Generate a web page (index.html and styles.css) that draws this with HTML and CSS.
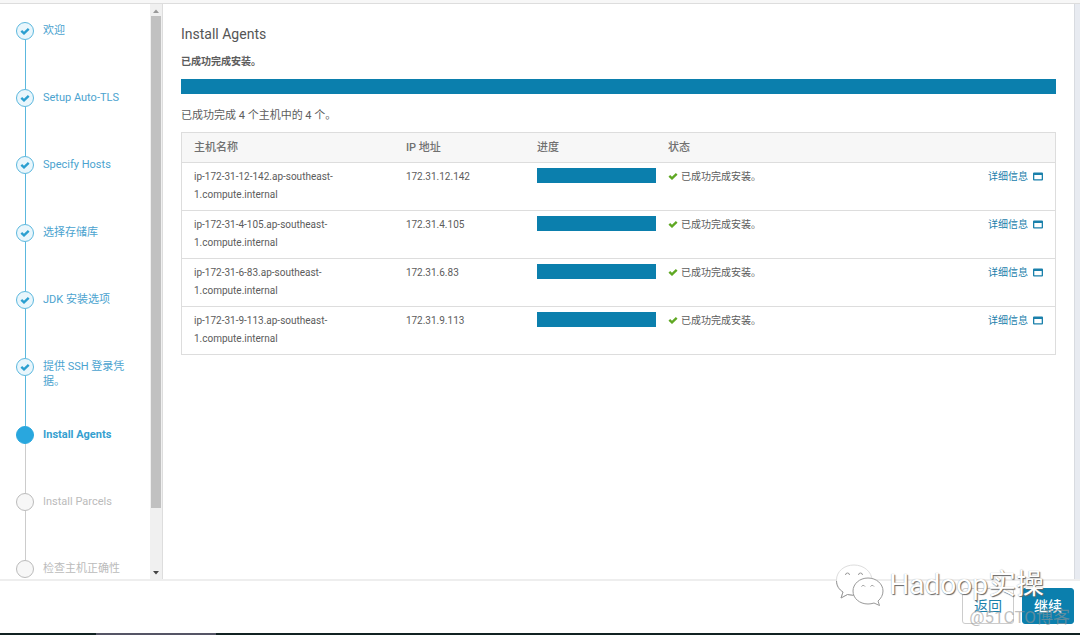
FILE: index.html
```html
<!DOCTYPE html>
<html lang="zh-CN">
<head>
<meta charset="utf-8">
<title>Install Agents</title>
<link rel="stylesheet" href="styles.css">
</head>
<body>
<svg class="defs" aria-hidden="true">
  <symbol id="check" viewBox="0 0 10 10"><path d="M1.300 4.800 L4 7.300 L8.700 2.800" fill="none" stroke="currentColor" stroke-width="2.400"/></symbol>
  <symbol id="window" viewBox="0 0 10 9"><path fill="currentColor" fill-rule="evenodd" d="M1 0.500h8a1 1 0 0 1 1 1v6a1 1 0 0 1-1 1H1a1 1 0 0 1-1-1v-6a1 1 0 0 1 1-1zM1.300 3v4.200h7.400V3z"/></symbol>
</svg>
<div class="app">
  <div class="topline"></div>
  <div class="body">
    <aside class="sidebar">
      <ol class="steps">
        <li class="step done"><span class="dot"><svg><use href="#check"/></svg></span><a href="#" class="label">欢迎</a></li>
        <li class="step done"><span class="dot"><svg><use href="#check"/></svg></span><a href="#" class="label">Setup Auto-TLS</a></li>
        <li class="step done"><span class="dot"><svg><use href="#check"/></svg></span><a href="#" class="label">Specify Hosts</a></li>
        <li class="step done"><span class="dot"><svg><use href="#check"/></svg></span><a href="#" class="label">选择存储库</a></li>
        <li class="step done"><span class="dot"><svg><use href="#check"/></svg></span><a href="#" class="label">JDK 安装选项</a></li>
        <li class="step done"><span class="dot"><svg><use href="#check"/></svg></span><a href="#" class="label">提供 SSH 登录凭据。</a></li>
        <li class="step current"><span class="dot"></span><span class="label">Install Agents</span></li>
        <li class="step"><span class="dot"></span><span class="label">Install Parcels</span></li>
        <li class="step"><span class="dot"></span><span class="label">检查主机正确性</span></li>
      </ol>
      <div class="scrollbar" aria-hidden="true">
        <svg class="arrow up" viewBox="0 0 6 4"><path d="M0 4L3 0.5L6 4z"/></svg>
        <div class="thumb"></div>
        <svg class="arrow down" viewBox="0 0 6 4"><path d="M0 0L3 3.5L6 0z"/></svg>
      </div>
    </aside>
    <main class="content">
      <h1>Install Agents</h1>
      <p class="summary">已成功完成安装。</p>
      <div class="bar" role="progressbar" aria-valuenow="100" aria-label="安装进度"></div>
      <p class="count">已成功完成 4 个主机中的 4 个。</p>
      <table class="hosts">
        <thead>
          <tr><th class="c-name">主机名称</th><th class="c-ip">IP 地址</th><th class="c-progress">进度</th><th class="c-status">状态</th><th></th></tr>
        </thead>
        <tbody>
          <tr>
            <td>ip-172-31-12-142.ap-southeast-<br>1.compute.internal</td><td>172.31.12.142</td>
            <td><div class="bar" role="progressbar" aria-valuenow="100" aria-label="进度"></div></td>
            <td><svg class="ok"><use href="#check"/></svg>已成功完成安装。</td>
            <td class="details"><a href="#">详细信息<svg><use href="#window"/></svg></a></td>
          </tr>
          <tr>
            <td>ip-172-31-4-105.ap-southeast-<br>1.compute.internal</td><td>172.31.4.105</td>
            <td><div class="bar" role="progressbar" aria-valuenow="100" aria-label="进度"></div></td>
            <td><svg class="ok"><use href="#check"/></svg>已成功完成安装。</td>
            <td class="details"><a href="#">详细信息<svg><use href="#window"/></svg></a></td>
          </tr>
          <tr>
            <td>ip-172-31-6-83.ap-southeast-<br>1.compute.internal</td><td>172.31.6.83</td>
            <td><div class="bar" role="progressbar" aria-valuenow="100" aria-label="进度"></div></td>
            <td><svg class="ok"><use href="#check"/></svg>已成功完成安装。</td>
            <td class="details"><a href="#">详细信息<svg><use href="#window"/></svg></a></td>
          </tr>
          <tr>
            <td>ip-172-31-9-113.ap-southeast-<br>1.compute.internal</td><td>172.31.9.113</td>
            <td><div class="bar" role="progressbar" aria-valuenow="100" aria-label="进度"></div></td>
            <td><svg class="ok"><use href="#check"/></svg>已成功完成安装。</td>
            <td class="details"><a href="#">详细信息<svg><use href="#window"/></svg></a></td>
          </tr>
        </tbody>
      </table>
    </main>
    <div class="gutter"></div>
  </div>
  <footer class="footer">
    <button class="btn" type="button">返回</button>
    <button class="btn primary" type="button">继续</button>
  </footer>
  <div class="taskbar"></div>
  <div class="brand">
    <svg viewBox="0 0 50 42">
      <g fill="#fff" stroke="#999" stroke-width="1">
        <path d="M19 1C9 1 1.500 7.500 1.500 16c0 5 2.500 9 6.500 12L6 34l6.500-3.500C15 31.300 17 31.500 20 31.500C30 31.500 37 25 37 16.500C37 8 29 1 19 1z" stroke="#ddd"/>
        <path d="M33 14C24.500 14 18 20 18 27c0 7.300 6.500 13 15 13c2 0 4-.3 6-1l5.500 2.500L43 37c3-2.500 5-6 5-10C48 20 41.500 14 33 14z"/>
        <path d="M1.500 17c0 5 2.500 8.500 6.500 11L6 34l6.500-3.500l6 .8M10.500 11a2 2 0 0 1 4 0M23.500 11a2 2 0 0 1 4 0M26.500 22.500a2 2 0 0 1 3.500 0M35.500 22.500a2 2 0 0 1 3.500 0" fill="none"/>
      </g>
    </svg>
    <span>Hadoop实操</span>
  </div>
  <div class="credit">@51CTO博客</div>
</div>
</body>
</html>
```
FILE: styles.css
```css
* { box-sizing: border-box; }
body {
  margin: 0;
  background: #fff;
  color: #5c5c5c;
  font: 10px/18px Roboto, "Noto Sans CJK SC", sans-serif;
}
h1, p, ol { margin: 0; padding: 0; }
a { color: #1a80ab; text-decoration: none; }
.defs { display: none; }
.app { position: relative; display: flex; flex-direction: column; height: 100vh; overflow: hidden; }
.topline { flex: none; height: 4px; background: #f7f7f7; border-bottom: 1px solid #ddd; }
.body { display: flex; flex: 1; min-height: 0; }

.sidebar { display: flex; flex: none; width: 163px; border-right: 1px solid #ddd; overflow: hidden; }
.steps { flex: 1; min-width: 0; padding: 18px 22px 0 16px; list-style: none; }
.step { position: relative; display: flex; gap: 9px; height: 67px; color: #bbb; font-size: 11px; line-height: 15px; }
.step:nth-child(3n) { height: 68px; }
.step::before { content: ""; position: absolute; left: 9px; top: 18px; bottom: 0; width: 1px; background: #ccc; }
.step.done::before { background: #5cb8de; }
.step:last-child::before { display: none; }
.dot { display: flex; flex: none; align-items: center; justify-content: center; width: 18px; height: 18px; border: 1px solid #bbb; border-radius: 50%; background: #f7f7f7; }
.done .dot { border-color: #5cb8de; background: #e9f6fc; color: #2b9fd0; }
.current .dot { border-color: #29a7de; background: #29a7de; }
.dot svg { width: 10px; height: 10px; }
.label { padding-top: 1px; }
.done .label { color: #4ba3cf; }
.current .label { color: #359fd0; font-weight: 700; }

.scrollbar { display: flex; flex: none; flex-direction: column; align-items: center; width: 12px; padding: 5px 0 4px; background: #f0f0f0; }
.arrow { flex: none; width: 6px; height: 4px; }
.up { fill: #999; }
.down { fill: #444; margin-top: auto; }
.thumb { width: 10px; height: 87%; margin-top: 3px; background: #c1c1c1; }

.content { flex: 1; min-width: 0; padding: 20px 18px 0; }
h1 { color: #555; font-size: 14px; line-height: 20px; font-weight: 400; }
.summary { margin-top: 9px; font-weight: 700; }
.bar { height: 15px; background: #0b7fad; }
.content > .bar { margin-top: 8px; }
.count { margin-top: 13px; font-size: 11px; }
.gutter { flex: none; width: 6px; background: #e8ebf1; border-left: 1px solid #d8dbe0; }

.hosts { width: 100%; margin-top: 7px; border: 1px solid #ddd; border-collapse: collapse; table-layout: fixed; }
.hosts th { height: 30px; padding: 0 0 0 12px; background: #f7f7f7; color: #707070; font-size: 11px; font-weight: 500; text-align: left; }
.hosts td { padding: 5px 0 6px 12px; border-top: 1px solid #ddd; vertical-align: top; }
.c-name { width: 24.3%; }
.c-ip, .c-progress { width: 15%; }
.c-status { width: 30%; }
.ok { width: 10px; height: 10px; margin-right: 3px; color: #5fa823; vertical-align: -1px; }
.hosts .details { padding-right: 12px; text-align: right; }
.details svg { width: 10px; height: 9px; margin-left: 5px; vertical-align: -1px; }

.footer { display: flex; flex: none; justify-content: flex-end; gap: 8px; height: 54px; padding: 7px 6px 0 0; border-top: 2px solid #eee; background: #fff; }
.btn { width: 52px; height: 36px; padding: 0; border: 1px solid #ccc; border-radius: 3px; background: #fff; color: #1a80ab; font: 14px/20px Roboto, "Noto Sans CJK SC", sans-serif; }
.primary { border-color: #0b7fad; background: #0b7fad; color: #fff; font-weight: 500; }
.taskbar { flex: none; height: 2px; background: linear-gradient(90deg, #122 0 96px, #556 96px 216px, #122 216px); }

.brand { position: absolute; right: 36px; bottom: 29px; display: flex; align-items: center; gap: 4px; color: #fff; font-size: 28px; line-height: 42px; text-shadow: 1px 1px 1px #666, 0 0 1px #999; pointer-events: none; }
.brand svg { width: 50px; height: 42px; }
.credit { position: absolute; right: 10px; bottom: 7px; color: rgba(150, 150, 150, .6); font-size: 17px; line-height: 22px; pointer-events: none; }
```
